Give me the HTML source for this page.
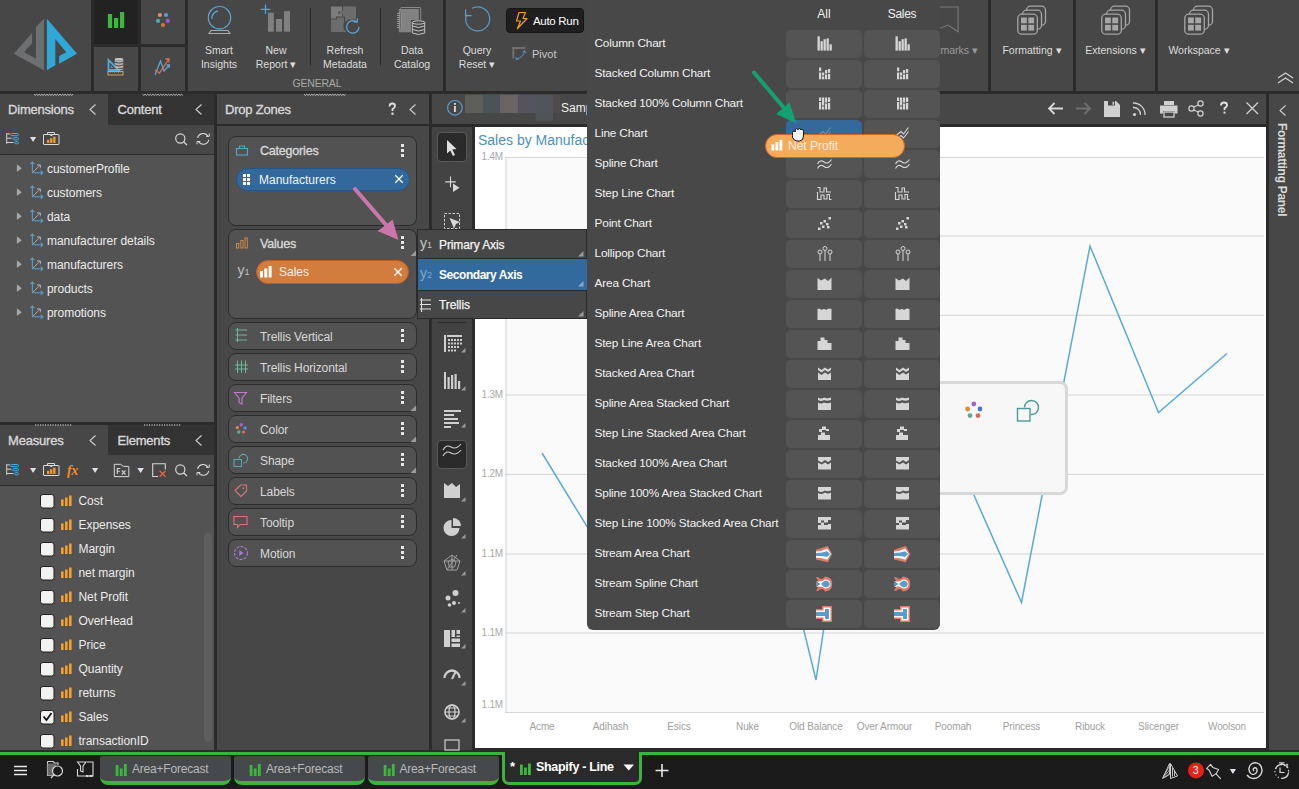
<!DOCTYPE html>
<html><head><meta charset="utf-8">
<style>
*{box-sizing:border-box;margin:0;padding:0}
html,body{width:1299px;height:789px;overflow:hidden;background:#2b2b2b;font-family:"Liberation Sans",sans-serif;color:#e0e0e0}
.a{position:absolute}
.t{position:absolute;white-space:nowrap;line-height:1}
svg{position:absolute;overflow:visible}
.rt{font-size:10.5px;color:#dcdcdc;text-align:center;line-height:14px}
.cell{position:absolute;width:76px;height:28px;background:#545454;border-radius:5px}
.dz{position:absolute;left:228px;width:189px;background:#525252;border:1px solid #2c2c2c;border-radius:8px}
.dzs{height:27px}
.kb{position:absolute;width:3px;height:3px;background:#e6e6e6;box-shadow:0 5px 0 #e6e6e6,0 10px 0 #e6e6e6}
</style></head><body>
<!-- ============ RIBBON ============ -->
<div class="a" style="left:0;top:0;width:91px;height:91px;background:#474747"></div>
<svg style="left:0;top:0" width="91" height="91">
 <polygon fill="#6e6f71" points="43.9,18.8 43.9,70.2 13.8,53.8 32.1,32.9 32.1,43.2 24.1,51.9 35.9,58.8 35.9,27.2"/>
 <polygon fill="#2fa8d8" points="46.9,18.8 77,53.8 59.1,63.7 59.1,56.1 66.3,52.3 55.3,39 55.3,65.2 46.9,70.2"/>
</svg>
<div class="a" style="left:94px;top:0;width:44px;height:44px;background:#222"></div>
<div class="a" style="left:141px;top:0;width:44px;height:44px;background:#474747"></div>
<div class="a" style="left:94px;top:47px;width:44px;height:44px;background:#474747"></div>
<div class="a" style="left:141px;top:47px;width:44px;height:44px;background:#474747"></div>
<div class="a" style="left:188px;top:0;width:255px;height:91px;background:#474747"></div>
<div class="a" style="left:446px;top:0;width:542px;height:91px;background:#474747"></div>
<div class="a" style="left:991px;top:0;width:82px;height:91px;background:#474747"></div>
<div class="a" style="left:1076px;top:0;width:79px;height:91px;background:#474747"></div>
<div class="a" style="left:1158px;top:0;width:141px;height:91px;background:#474747"></div>


<!-- ribbon tile icons -->
<svg style="left:94px;top:0" width="44" height="44">
 <rect x="13.9" y="14" width="4.2" height="14" fill="#3cb83c"/>
 <rect x="20" y="18" width="4.2" height="10" fill="#3cb83c"/>
 <rect x="26" y="12" width="4.2" height="16" fill="#3cb83c"/>
</svg>
<svg style="left:141px;top:0" width="44" height="44">
 <circle cx="18.9" cy="15" r="2.1" fill="#e58a7a"/>
 <circle cx="25" cy="15" r="2.1" fill="#5a9fd0"/>
 <circle cx="17" cy="20.9" r="2.1" fill="#4fae9c"/>
 <circle cx="26.8" cy="20.9" r="2.1" fill="#9a5bc9"/>
 <circle cx="22" cy="25" r="2.1" fill="#d9762b"/>
</svg>
<svg style="left:94px;top:47px" width="44" height="44">
 <path d="M14.5,13 L14.5,23 L24.5,23 Z" fill="none" stroke="#5aa7d6" stroke-width="1.8" stroke-linejoin="miter"/>
 <path d="M16.8,18.5 L16.8,21 L19.3,21 Z" fill="#5aa7d6"/>
 <ellipse cx="25" cy="12.3" rx="4.3" ry="1.3" fill="#c8c8c8"/>
 <path d="M20.7,13 v1.8 q4.3,1.6 8.6,0 v-1.8 q-4.3,1.6 -8.6,0z M20.7,15.8 v1.8 q4.3,1.6 8.6,0 v-1.8 q-4.3,1.6 -8.6,0z M20.7,18.6 v1.8 q4.3,1.6 8.6,0 v-1.8 q-4.3,1.6 -8.6,0z M22.5,21.4 v1.2 q3,1 6.8,0 v-1.2 q-3,1 -6.8,0z" fill="#b4b4b4"/>
 <rect x="14" y="24.5" width="15" height="3.5" fill="none" stroke="#d1a35a" stroke-width="1"/>
 <path d="M16.5,24.5 v1.5 M18.5,24.5 v1 M20.5,24.5 v1.5 M22.5,24.5 v1 M24.5,24.5 v1.5 M26.5,24.5 v1" stroke="#d1a35a" stroke-width="0.7"/>
</svg>
<svg style="left:141px;top:47px" width="44" height="44">
 <polyline points="14,28 19.5,14 23,24 28,18.5" fill="none" stroke="#5aa7d6" stroke-width="1.3"/>
 <path d="M25.5,18 L28.5,18 L28,21" fill="none" stroke="#5aa7d6" stroke-width="1.3"/>
 <polyline points="14,23 18.5,26 27.5,12.5" fill="none" stroke="#e07050" stroke-width="1.3"/>
 <path d="M24.5,12 L28,12 L27.8,15.5" fill="none" stroke="#e07050" stroke-width="1.3"/>
</svg>
<!-- Smart Insights -->
<svg style="left:188px;top:0" width="60" height="40">
 <circle cx="31.5" cy="17.7" r="11.2" fill="none" stroke="#5aa7d6" stroke-width="1.2"/>
 <path d="M25,20 A7,7 0 0 1 31,12" fill="none" stroke="#5aa7d6" stroke-width="1.3" transform="translate(-1,-1)"/>
 <path d="M23,30.5 L40,30.5 L42,33.5 L21,33.5 Z" fill="none" stroke="#aaa" stroke-width="1.1"/>
</svg>
<div class="t rt" style="left:189px;top:43px;width:60px">Smart<br>Insights</div>
<!-- New Report -->
<svg style="left:255px;top:0" width="45" height="40">
 <rect x="13" y="12.7" width="5.8" height="19" fill="#808080"/>
 <rect x="21" y="19" width="6" height="12.7" fill="#808080"/>
 <rect x="29" y="11.2" width="6" height="20.5" fill="#808080"/>
 <path d="M10.5,4.5 v9.5 M5.8,9.3 h9.5" stroke="#4aa5e0" stroke-width="1.3"/>
</svg>
<div class="t rt" style="left:246px;top:43px;width:60px">New<br>Report &#9662;</div>
<div class="a" style="left:310px;top:8px;width:1px;height:58px;background:#2a2a2a"></div>
<!-- Refresh Metadata -->
<svg style="left:315px;top:0" width="60" height="40">
 <path d="M16,6.5 H27 V11 H23.5 V14 H27 V16.5 H21 V18.5 H16 Z" fill="#7c7c7c"/>
 <path d="M28,6.5 H41 V19.5 H35 A7,7 0 0 0 30,22 V16.5 H28 V14 H24.5 V11 H28 Z" fill="#6c6c6c"/>
 <path d="M16,19.5 H22 V17.5 H29 V23 A7,7 0 0 0 31.5,32 H16 Z" fill="#6c6c6c"/>
 <path d="M44,27 A6.2,6.2 0 1 1 41.5,22" fill="none" stroke="#5aa7d6" stroke-width="1.3"/>
 <path d="M38.5,21.5 L42,22.3 L42.5,18.5" fill="none" stroke="#5aa7d6" stroke-width="1.3"/>
</svg>
<div class="t rt" style="left:315px;top:43px;width:60px">Refresh<br>Metadata</div>
<div class="a" style="left:380px;top:8px;width:1px;height:58px;background:#2a2a2a"></div>
<!-- Data Catalog -->
<svg style="left:385px;top:0" width="50" height="40">
 <path d="M15.5,9 V8.5 Q15.5,7.5 16.5,7.5 H35 Q35.7,7.5 35.7,8.5 V20" fill="none" stroke="#8a8a8a" stroke-width="1"/>
 <rect x="14.2" y="9.5" width="19" height="22.3" fill="#828282"/>
 <rect x="14.2" y="9.5" width="19" height="22.3" fill="none" stroke="#8c8c8c" stroke-width="0.8"/>
 <path d="M12,13.5 H17 M12,15.5 H17 M12,17.5 H17 M12,19.5 H17 M12,21.5 H17 M12,23.5 H17 M12,25.5 H17 M12,27.5 H17" stroke="#9c9c9c" stroke-width="0.9"/>
 <path d="M15.5,12.5 V28.5" stroke="#6a6a6a" stroke-width="1"/>
 <rect x="26" y="20" width="15" height="16" fill="#474747"/>
 <ellipse cx="33.5" cy="22.5" rx="6.2" ry="1.7" fill="none" stroke="#c4c4c4" stroke-width="1"/>
 <path d="M27.3,22.5 V33 Q33.5,36 39.7,33 V22.5 M27.3,26 Q33.5,29 39.7,26 M27.3,29.5 Q33.5,32.5 39.7,29.5" fill="none" stroke="#c4c4c4" stroke-width="1"/>
</svg>
<div class="t rt" style="left:382px;top:43px;width:60px">Data<br>Catalog</div>
<div class="t" style="left:292.5px;top:77.5px;font-size:10.5px;color:#a8a8a8;letter-spacing:-0.2px">GENERAL</div>
<!-- Query Reset -->
<svg style="left:455px;top:0" width="45" height="40">
 <path d="M11.5,14.5 A12,12 0 1 0 17,8.3" fill="none" stroke="#5a9ccc" stroke-width="1.2"/>
 <path d="M10.6,9.5 L10.6,15.6 L16.7,15.6" fill="none" stroke="#5a9ccc" stroke-width="1.2"/>
</svg>
<div class="t rt" style="left:447px;top:43px;width:60px">Query<br>Reset &#9662;</div>
<!-- Auto Run -->
<div class="a" style="left:506px;top:8px;width:78px;height:25px;background:#1f1f1f;border:1px solid #151515;border-radius:4px"></div>
<svg style="left:506px;top:8px" width="78" height="25">
 <path d="M13,4.5 L19.5,4.5 L17,10.5 L21,10.5 L11.5,20.5 L14.5,13 L10.5,13 Z" fill="none" stroke="#f0a020" stroke-width="1.2" stroke-linejoin="round"/>
</svg>
<div class="t" style="left:533px;top:15.5px;font-size:11.5px;color:#fff;letter-spacing:-0.3px">Auto Run</div>
<!-- Pivot -->
<svg style="left:510px;top:45px" width="20" height="18">
 <rect x="2.3" y="2" width="2" height="11.5" fill="#707070"/>
 <rect x="2.3" y="2" width="13" height="2" fill="#707070"/>
 <path d="M6.5,13.5 Q13.5,13 14.5,6" fill="none" stroke="#5a8fb8" stroke-width="1"/>
 <path d="M12.8,7.5 L14.5,5.5 L16,7.8 M6,12 L6,14.2 L8.5,14.5" fill="none" stroke="#5a8fb8" stroke-width="1"/>
</svg>
<div class="t" style="left:532px;top:48.5px;font-size:11px;color:#c8c8c8">Pivot</div>
<!-- Bookmarks (partially hidden) -->
<svg style="left:930px;top:0" width="50" height="40">
 <path d="M1,7 H28 V31.7 L18,25 L1,31.7" fill="none" stroke="#7a7a7a" stroke-width="1.1"/>
</svg>
<div class="t" style="left:890px;top:45px;width:88px;text-align:right;font-size:10.5px;color:#9a9a9a">Bookmarks &#9662;</div>
<svg style="left:1016px;top:0" width="40" height="40">
 <rect x="10.5" y="6.2" width="19" height="19" rx="4" fill="#474747" stroke="#a6a6a6" stroke-width="1.3"/>
 <rect x="6.5" y="10.2" width="19" height="19" rx="4" fill="#474747" stroke="#a6a6a6" stroke-width="1.3"/>
 <rect x="1.8" y="14.2" width="19.5" height="20" rx="4" fill="#474747" stroke="#a6a6a6" stroke-width="1.3"/>
 <rect x="5" y="17.5" width="5.8" height="5.8" fill="#a6a6a6"/><rect x="12.3" y="17.5" width="5.8" height="5.8" fill="#a6a6a6"/>
 <rect x="5" y="24.8" width="5.8" height="5.8" fill="#a6a6a6"/><rect x="12.3" y="24.8" width="5.8" height="5.8" fill="#a6a6a6"/>
</svg><div class="t rt" style="left:991px;top:43px;width:82px">Formatting &#9662;</div>
<svg style="left:1100px;top:0" width="40" height="40">
 <rect x="10.5" y="6.2" width="19" height="19" rx="4" fill="#474747" stroke="#a6a6a6" stroke-width="1.3"/>
 <rect x="6.5" y="10.2" width="19" height="19" rx="4" fill="#474747" stroke="#a6a6a6" stroke-width="1.3"/>
 <rect x="1.8" y="14.2" width="19.5" height="20" rx="4" fill="#474747" stroke="#a6a6a6" stroke-width="1.3"/>
 <rect x="5" y="17.5" width="5.8" height="5.8" fill="#a6a6a6"/><rect x="12.3" y="17.5" width="5.8" height="5.8" fill="#a6a6a6"/>
 <rect x="5" y="24.8" width="5.8" height="5.8" fill="#a6a6a6"/><rect x="12.3" y="24.8" width="5.8" height="5.8" fill="#a6a6a6"/>
</svg><div class="t rt" style="left:1076px;top:43px;width:79px">Extensions &#9662;</div>
<svg style="left:1183px;top:0" width="40" height="40">
 <rect x="10.5" y="6.2" width="19" height="19" rx="4" fill="#474747" stroke="#a6a6a6" stroke-width="1.3"/>
 <rect x="6.5" y="10.2" width="19" height="19" rx="4" fill="#474747" stroke="#a6a6a6" stroke-width="1.3"/>
 <rect x="1.8" y="14.2" width="19.5" height="20" rx="4" fill="#474747" stroke="#a6a6a6" stroke-width="1.3"/>
 <rect x="5" y="17.5" width="5.8" height="5.8" fill="#a6a6a6"/><rect x="12.3" y="17.5" width="5.8" height="5.8" fill="#a6a6a6"/>
 <rect x="5" y="24.8" width="5.8" height="5.8" fill="#a6a6a6"/><rect x="12.3" y="24.8" width="5.8" height="5.8" fill="#a6a6a6"/>
</svg><div class="t rt" style="left:1158px;top:43px;width:82px">Workspace &#9662;</div>
<svg style="left:1276px;top:70px" width="20" height="16">
 <path d="M2,8 L9.5,3 L17,8 M2,13 L9.5,8 L17,13" fill="none" stroke="#d0d0d0" stroke-width="1.2"/>
</svg>

<!-- ============ LEFT PANELS ============ -->
<!-- Dimensions -->
<div class="a" style="left:0;top:94px;width:108px;height:31px;background:#474747"></div>
<div class="a" style="left:108px;top:94px;width:106px;height:31px;background:#333"></div>
<div class="a" style="left:0;top:125px;width:214px;height:29px;background:#474747"></div>
<div class="a" style="left:0;top:155px;width:214px;height:267px;background:#535353"></div>
<!-- Measures -->
<div class="a" style="left:0;top:425px;width:108px;height:30px;background:#474747"></div>
<div class="a" style="left:108px;top:425px;width:106px;height:30px;background:#333"></div>
<div class="a" style="left:0;top:455px;width:214px;height:30px;background:#474747"></div>
<div class="a" style="left:0;top:486px;width:214px;height:264px;background:#535353"></div>


<!-- grips -->
<svg style="left:0;top:93px;z-index:5" width="430" height="4">
 <path d="M34,1.2 L35.3,2.4 L36.599999999999994,1.2 L37.89999999999999,2.4 L39.19999999999999,1.2 L40.499999999999986,2.4 L41.79999999999998,1.2 L43.09999999999998,2.4 L44.39999999999998,1.2 L45.699999999999974,2.4 L46.99999999999997,1.2 L48.29999999999997,2.4 L49.599999999999966,1.2 L50.89999999999996,2.4 L52.19999999999996,1.2 L53.49999999999996,2.4 L54.799999999999955,1.2 L56.09999999999995,2.4 L57.39999999999995,1.2 L58.699999999999946,2.4 L59.99999999999994,1.2 L61.29999999999994,2.4 L62.59999999999994,1.2 L63.899999999999935,2.4 L65.19999999999993,1.2 L66.49999999999993,2.4 L67.79999999999993,1.2 L69.09999999999992,2.4 L70.39999999999992,1.2 L71.69999999999992,2.4 L72.99999999999991,1.2 M142.5,1.2 L143.8,2.4 L145.10000000000002,1.2 L146.40000000000003,2.4 L147.70000000000005,1.2 L149.00000000000006,2.4 L150.30000000000007,1.2 L151.60000000000008,2.4 L152.9000000000001,1.2 L154.2000000000001,2.4 L155.5000000000001,1.2 L156.80000000000013,2.4 L158.10000000000014,1.2 L159.40000000000015,2.4 L160.70000000000016,1.2 L162.00000000000017,2.4 L163.30000000000018,1.2 L164.6000000000002,2.4 L165.9000000000002,1.2 L167.20000000000022,2.4 L168.50000000000023,1.2 L169.80000000000024,2.4 L171.10000000000025,1.2 L172.40000000000026,2.4 L173.70000000000027,1.2 L175.00000000000028,2.4 L176.3000000000003,1.2 L177.6000000000003,2.4 L178.90000000000032,1.2 L180.20000000000033,2.4 L181.50000000000034,1.2 L182.80000000000035,2.4 M304,1.2 L305.3,2.4 L306.6,1.2 L307.90000000000003,2.4 L309.20000000000005,1.2 L310.50000000000006,2.4 L311.80000000000007,1.2 L313.1000000000001,2.4 L314.4000000000001,1.2 L315.7000000000001,2.4 L317.0000000000001,1.2 L318.3000000000001,2.4 L319.60000000000014,1.2 L320.90000000000015,2.4 L322.20000000000016,1.2 L323.50000000000017,2.4 L324.8000000000002,1.2 L326.1000000000002,2.4 L327.4000000000002,1.2 L328.7000000000002,2.4 L330.0000000000002,1.2 L331.30000000000024,2.4 L332.60000000000025,1.2 L333.90000000000026,2.4 L335.2000000000003,1.2 L336.5000000000003,2.4 L337.8000000000003,1.2 L339.1000000000003,2.4 L340.4000000000003,1.2 L341.70000000000033,2.4 L343.00000000000034,1.2 L344.30000000000035,2.4 L345.60000000000036,1.2" fill="none" stroke="#e0e0e0" stroke-width="0.8"/>
</svg>
<svg style="left:0;top:423px;z-index:5" width="220" height="4"><path d="M35,2 H72 M144,2 H181" stroke="#e8e8e8" stroke-width="1.2" stroke-dasharray="1.2,1.3"/></svg>
<div class="t" style="left:8px;top:103px;font-size:13px;color:#d8d8d8;letter-spacing:-0.2px;-webkit-text-stroke:0.35px #d8d8d8">Dimensions</div>
<div class="t" style="left:117.5px;top:103px;font-size:13px;color:#d8d8d8;letter-spacing:-0.2px;-webkit-text-stroke:0.35px #d8d8d8">Content</div>
<svg style="left:0;top:94px" width="214" height="31">
 <path d="M95.5,10.5 L90,15.5 L95.5,20.5 M201.5,10.5 L196,15.5 L201.5,20.5" fill="none" stroke="#cfcfcf" stroke-width="1.1"/>
</svg>
<!-- dims toolbar -->
<svg style="left:0;top:125px" width="214" height="29">
 <path d="M6.7,8.1 V18.9 M6.7,8.9 H10 M6.7,13.2 H11.5 M6.7,17.5 H13.5" fill="none" stroke="#d0d0d0" stroke-width="1"/>
 <rect x="10.7" y="8.5" width="7.8" height="2.2" rx="1.1" fill="none" stroke="#3cb0f0" stroke-width="1"/>
 <rect x="12.8" y="12.6" width="5.7" height="2.2" rx="1.1" fill="none" stroke="#3cb0f0" stroke-width="1"/>
 <rect x="14.7" y="16.6" width="3.8" height="2.2" rx="1.1" fill="none" stroke="#3cb0f0" stroke-width="1"/>
 <path d="M30,12 H36.2 L33.1,16.9 Z" fill="#dde2ea"/>
 <rect x="43.5" y="9.5" width="15.5" height="10" rx="0.5" fill="none" stroke="#d8d8d8" stroke-width="1"/>
 <path d="M47.5,9.5 V7.5 H54.5 V9.5" fill="none" stroke="#d8d8d8" stroke-width="1"/>
 <rect x="50.3" y="10" width="2" height="1" fill="#d8d8d8"/>
 <rect x="47" y="14.8" width="2.3" height="3.1" fill="#f0a030"/><rect x="50.1" y="13.2" width="2.3" height="4.7" fill="#f0a030"/><rect x="53.2" y="11.7" width="2.3" height="6.2" fill="#f0a030"/>
 <circle cx="180.3" cy="13.5" r="4.6" fill="none" stroke="#d8d8d8" stroke-width="1.2"/>
 <path d="M183.6,16.8 L186.9,20" stroke="#d8d8d8" stroke-width="1.3"/>
 <path d="M197.6,13 A5.6,5.6 0 0 1 208,11.5 M208.8,14.8 A5.6,5.6 0 0 1 198.4,16.3" fill="none" stroke="#d8d8d8" stroke-width="1.1"/>
 <path d="M206,11.3 H209.3 V8.5 M200.3,16.5 H197 V19.3" fill="none" stroke="#d8d8d8" stroke-width="1"/>
</svg>
<svg style="left:0;top:160.7px" width="47" height="16">
 <path d="M16.9,3.3 L21.8,7.2 L16.9,11.1 Z" fill="#a8a8a8"/>
 <path d="M32.4,1 V11.7 H42.8 M30.3,3.1 L32.4,1 L34.5,3.1 M40.7,9.6 L42.8,11.7 L40.7,13.8" fill="none" stroke="#5a9ec9" stroke-width="1.1"/>
 <path d="M33.4,10.8 L40.2,4 M37.1,3.9 H40.4 V7.2" fill="none" stroke="#c8c8c8" stroke-width="1" stroke-dasharray="1.6,0.5"/>
</svg>
<div class="t" style="left:47px;top:163.2px;font-size:12px;color:#ececec;letter-spacing:-0.05px">customerProfile</div>
<svg style="left:0;top:184.7px" width="47" height="16">
 <path d="M16.9,3.3 L21.8,7.2 L16.9,11.1 Z" fill="#a8a8a8"/>
 <path d="M32.4,1 V11.7 H42.8 M30.3,3.1 L32.4,1 L34.5,3.1 M40.7,9.6 L42.8,11.7 L40.7,13.8" fill="none" stroke="#5a9ec9" stroke-width="1.1"/>
 <path d="M33.4,10.8 L40.2,4 M37.1,3.9 H40.4 V7.2" fill="none" stroke="#c8c8c8" stroke-width="1" stroke-dasharray="1.6,0.5"/>
</svg>
<div class="t" style="left:47px;top:187.2px;font-size:12px;color:#ececec;letter-spacing:-0.05px">customers</div>
<svg style="left:0;top:208.7px" width="47" height="16">
 <path d="M16.9,3.3 L21.8,7.2 L16.9,11.1 Z" fill="#a8a8a8"/>
 <path d="M32.4,1 V11.7 H42.8 M30.3,3.1 L32.4,1 L34.5,3.1 M40.7,9.6 L42.8,11.7 L40.7,13.8" fill="none" stroke="#5a9ec9" stroke-width="1.1"/>
 <path d="M33.4,10.8 L40.2,4 M37.1,3.9 H40.4 V7.2" fill="none" stroke="#c8c8c8" stroke-width="1" stroke-dasharray="1.6,0.5"/>
</svg>
<div class="t" style="left:47px;top:211.2px;font-size:12px;color:#ececec;letter-spacing:-0.05px">data</div>
<svg style="left:0;top:232.7px" width="47" height="16">
 <path d="M16.9,3.3 L21.8,7.2 L16.9,11.1 Z" fill="#a8a8a8"/>
 <path d="M32.4,1 V11.7 H42.8 M30.3,3.1 L32.4,1 L34.5,3.1 M40.7,9.6 L42.8,11.7 L40.7,13.8" fill="none" stroke="#5a9ec9" stroke-width="1.1"/>
 <path d="M33.4,10.8 L40.2,4 M37.1,3.9 H40.4 V7.2" fill="none" stroke="#c8c8c8" stroke-width="1" stroke-dasharray="1.6,0.5"/>
</svg>
<div class="t" style="left:47px;top:235.2px;font-size:12px;color:#ececec;letter-spacing:-0.05px">manufacturer details</div>
<svg style="left:0;top:256.7px" width="47" height="16">
 <path d="M16.9,3.3 L21.8,7.2 L16.9,11.1 Z" fill="#a8a8a8"/>
 <path d="M32.4,1 V11.7 H42.8 M30.3,3.1 L32.4,1 L34.5,3.1 M40.7,9.6 L42.8,11.7 L40.7,13.8" fill="none" stroke="#5a9ec9" stroke-width="1.1"/>
 <path d="M33.4,10.8 L40.2,4 M37.1,3.9 H40.4 V7.2" fill="none" stroke="#c8c8c8" stroke-width="1" stroke-dasharray="1.6,0.5"/>
</svg>
<div class="t" style="left:47px;top:259.2px;font-size:12px;color:#ececec;letter-spacing:-0.05px">manufacturers</div>
<svg style="left:0;top:280.7px" width="47" height="16">
 <path d="M16.9,3.3 L21.8,7.2 L16.9,11.1 Z" fill="#a8a8a8"/>
 <path d="M32.4,1 V11.7 H42.8 M30.3,3.1 L32.4,1 L34.5,3.1 M40.7,9.6 L42.8,11.7 L40.7,13.8" fill="none" stroke="#5a9ec9" stroke-width="1.1"/>
 <path d="M33.4,10.8 L40.2,4 M37.1,3.9 H40.4 V7.2" fill="none" stroke="#c8c8c8" stroke-width="1" stroke-dasharray="1.6,0.5"/>
</svg>
<div class="t" style="left:47px;top:283.2px;font-size:12px;color:#ececec;letter-spacing:-0.05px">products</div>
<svg style="left:0;top:304.7px" width="47" height="16">
 <path d="M16.9,3.3 L21.8,7.2 L16.9,11.1 Z" fill="#a8a8a8"/>
 <path d="M32.4,1 V11.7 H42.8 M30.3,3.1 L32.4,1 L34.5,3.1 M40.7,9.6 L42.8,11.7 L40.7,13.8" fill="none" stroke="#5a9ec9" stroke-width="1.1"/>
 <path d="M33.4,10.8 L40.2,4 M37.1,3.9 H40.4 V7.2" fill="none" stroke="#c8c8c8" stroke-width="1" stroke-dasharray="1.6,0.5"/>
</svg>
<div class="t" style="left:47px;top:307.2px;font-size:12px;color:#ececec;letter-spacing:-0.05px">promotions</div>

<div class="t" style="left:8px;top:433.5px;font-size:13px;color:#d8d8d8;letter-spacing:-0.2px;-webkit-text-stroke:0.35px #d8d8d8">Measures</div>
<div class="t" style="left:117.5px;top:433.5px;font-size:13px;color:#d8d8d8;letter-spacing:-0.2px;-webkit-text-stroke:0.35px #d8d8d8">Elements</div>
<svg style="left:0;top:425px" width="214" height="30">
 <path d="M95.5,10.5 L90,15.5 L95.5,20.5 M201.5,10.5 L196,15.5 L201.5,20.5" fill="none" stroke="#cfcfcf" stroke-width="1.1"/>
</svg>
<svg style="left:0;top:455px" width="214" height="30">
 <path d="M6.7,9.1 V19.9 M6.7,9.9 H10 M6.7,14.2 H11.5 M6.7,18.5 H13.5" fill="none" stroke="#d0d0d0" stroke-width="1"/>
 <rect x="10.7" y="9.5" width="7.8" height="2.2" rx="1.1" fill="none" stroke="#3cb0f0" stroke-width="1"/>
 <rect x="12.8" y="13.6" width="5.7" height="2.2" rx="1.1" fill="none" stroke="#3cb0f0" stroke-width="1"/>
 <rect x="14.7" y="17.6" width="3.8" height="2.2" rx="1.1" fill="none" stroke="#3cb0f0" stroke-width="1"/>
 <path d="M30,13 H36.2 L33.1,17.9 Z" fill="#dde2ea"/>
 <rect x="43.5" y="10.5" width="15.5" height="10" rx="0.5" fill="none" stroke="#d8d8d8" stroke-width="1"/>
 <path d="M47.5,10.5 V8.5 H54.5 V10.5" fill="none" stroke="#d8d8d8" stroke-width="1"/>
 <rect x="50.3" y="11" width="2" height="1" fill="#d8d8d8"/>
 <rect x="47" y="15.8" width="2.3" height="3.1" fill="#f0a030"/><rect x="50.1" y="14.2" width="2.3" height="4.7" fill="#f0a030"/><rect x="53.2" y="12.7" width="2.3" height="6.2" fill="#f0a030"/>
 <circle cx="180.3" cy="14.5" r="4.6" fill="none" stroke="#d8d8d8" stroke-width="1.2"/>
 <path d="M183.6,17.8 L186.9,21" stroke="#d8d8d8" stroke-width="1.3"/>
 <path d="M197.6,14 A5.6,5.6 0 0 1 208,12.5 M208.8,15.8 A5.6,5.6 0 0 1 198.4,17.3" fill="none" stroke="#d8d8d8" stroke-width="1.1"/>
 <path d="M206,12.3 H209.3 V9.5 M200.3,17.5 H197 V20.3" fill="none" stroke="#d8d8d8" stroke-width="1"/>
 <path d="M92,13 H98.2 L95.1,17.9 Z" fill="#dde2ea"/>
 <path d="M114.3,9.3 H120.7 L123.3,11.4 H128.8 V21.6 H114.3 Z" fill="none" stroke="#d8d8d8" stroke-width="1"/>
 <path d="M117.3,19 V13.5 H120.3 M117.3,16.2 H119.8" fill="none" stroke="#d8d8d8" stroke-width="1.1"/>
 <path d="M121.8,15.5 L125.5,19.5 M125.5,15.5 L121.8,19.5" stroke="#c8c8c8" stroke-width="1.2"/>
 <path d="M137.3,13 H143.9 L140.6,18 Z" fill="#dde2ea"/>
 <path d="M158,21.5 H152.7 V8.8 H165.3 V14.5" fill="none" stroke="#d8d8d8" stroke-width="1.1"/>
 <path d="M159.6,15.7 L165.6,21.7 M165.6,15.7 L159.6,21.7" stroke="#e8643c" stroke-width="1.4"/>
</svg>
<div class="t" style="left:67px;top:464px;font-size:14px;font-style:italic;font-weight:bold;font-family:'Liberation Serif',serif;color:#f08a2a;letter-spacing:-0.5px">fx</div>
<svg style="left:0;top:493.5px" width="78" height="14">
 <rect x="40.5" y="0.5" width="13.5" height="13.5" rx="2.5" fill="#f2f2f2" stroke="#1e1e1e" stroke-width="1"/>
 <rect x="61" y="5.5" width="2.6" height="6.5" fill="#f0a030"/><rect x="65" y="3.5" width="2.6" height="8.5" fill="#f0a030"/><rect x="69" y="1.5" width="2.6" height="10.5" fill="#f0a030"/>
</svg>
<div class="t" style="left:78.5px;top:495.0px;font-size:12px;color:#ececec;letter-spacing:-0.05px">Cost</div>
<svg style="left:0;top:517.5px" width="78" height="14">
 <rect x="40.5" y="0.5" width="13.5" height="13.5" rx="2.5" fill="#f2f2f2" stroke="#1e1e1e" stroke-width="1"/>
 <rect x="61" y="5.5" width="2.6" height="6.5" fill="#f0a030"/><rect x="65" y="3.5" width="2.6" height="8.5" fill="#f0a030"/><rect x="69" y="1.5" width="2.6" height="10.5" fill="#f0a030"/>
</svg>
<div class="t" style="left:78.5px;top:519.0px;font-size:12px;color:#ececec;letter-spacing:-0.05px">Expenses</div>
<svg style="left:0;top:541.5px" width="78" height="14">
 <rect x="40.5" y="0.5" width="13.5" height="13.5" rx="2.5" fill="#f2f2f2" stroke="#1e1e1e" stroke-width="1"/>
 <rect x="61" y="5.5" width="2.6" height="6.5" fill="#f0a030"/><rect x="65" y="3.5" width="2.6" height="8.5" fill="#f0a030"/><rect x="69" y="1.5" width="2.6" height="10.5" fill="#f0a030"/>
</svg>
<div class="t" style="left:78.5px;top:543.0px;font-size:12px;color:#ececec;letter-spacing:-0.05px">Margin</div>
<svg style="left:0;top:565.5px" width="78" height="14">
 <rect x="40.5" y="0.5" width="13.5" height="13.5" rx="2.5" fill="#f2f2f2" stroke="#1e1e1e" stroke-width="1"/>
 <rect x="61" y="5.5" width="2.6" height="6.5" fill="#f0a030"/><rect x="65" y="3.5" width="2.6" height="8.5" fill="#f0a030"/><rect x="69" y="1.5" width="2.6" height="10.5" fill="#f0a030"/>
</svg>
<div class="t" style="left:78.5px;top:567.0px;font-size:12px;color:#ececec;letter-spacing:-0.05px">net margin</div>
<svg style="left:0;top:589.5px" width="78" height="14">
 <rect x="40.5" y="0.5" width="13.5" height="13.5" rx="2.5" fill="#f2f2f2" stroke="#1e1e1e" stroke-width="1"/>
 <rect x="61" y="5.5" width="2.6" height="6.5" fill="#f0a030"/><rect x="65" y="3.5" width="2.6" height="8.5" fill="#f0a030"/><rect x="69" y="1.5" width="2.6" height="10.5" fill="#f0a030"/>
</svg>
<div class="t" style="left:78.5px;top:591.0px;font-size:12px;color:#ececec;letter-spacing:-0.05px">Net Profit</div>
<svg style="left:0;top:613.5px" width="78" height="14">
 <rect x="40.5" y="0.5" width="13.5" height="13.5" rx="2.5" fill="#f2f2f2" stroke="#1e1e1e" stroke-width="1"/>
 <rect x="61" y="5.5" width="2.6" height="6.5" fill="#f0a030"/><rect x="65" y="3.5" width="2.6" height="8.5" fill="#f0a030"/><rect x="69" y="1.5" width="2.6" height="10.5" fill="#f0a030"/>
</svg>
<div class="t" style="left:78.5px;top:615.0px;font-size:12px;color:#ececec;letter-spacing:-0.05px">OverHead</div>
<svg style="left:0;top:637.5px" width="78" height="14">
 <rect x="40.5" y="0.5" width="13.5" height="13.5" rx="2.5" fill="#f2f2f2" stroke="#1e1e1e" stroke-width="1"/>
 <rect x="61" y="5.5" width="2.6" height="6.5" fill="#f0a030"/><rect x="65" y="3.5" width="2.6" height="8.5" fill="#f0a030"/><rect x="69" y="1.5" width="2.6" height="10.5" fill="#f0a030"/>
</svg>
<div class="t" style="left:78.5px;top:639.0px;font-size:12px;color:#ececec;letter-spacing:-0.05px">Price</div>
<svg style="left:0;top:661.5px" width="78" height="14">
 <rect x="40.5" y="0.5" width="13.5" height="13.5" rx="2.5" fill="#f2f2f2" stroke="#1e1e1e" stroke-width="1"/>
 <rect x="61" y="5.5" width="2.6" height="6.5" fill="#f0a030"/><rect x="65" y="3.5" width="2.6" height="8.5" fill="#f0a030"/><rect x="69" y="1.5" width="2.6" height="10.5" fill="#f0a030"/>
</svg>
<div class="t" style="left:78.5px;top:663.0px;font-size:12px;color:#ececec;letter-spacing:-0.05px">Quantity</div>
<svg style="left:0;top:685.5px" width="78" height="14">
 <rect x="40.5" y="0.5" width="13.5" height="13.5" rx="2.5" fill="#f2f2f2" stroke="#1e1e1e" stroke-width="1"/>
 <rect x="61" y="5.5" width="2.6" height="6.5" fill="#f0a030"/><rect x="65" y="3.5" width="2.6" height="8.5" fill="#f0a030"/><rect x="69" y="1.5" width="2.6" height="10.5" fill="#f0a030"/>
</svg>
<div class="t" style="left:78.5px;top:687.0px;font-size:12px;color:#ececec;letter-spacing:-0.05px">returns</div>
<svg style="left:0;top:709.5px" width="78" height="14">
 <rect x="40.5" y="0.5" width="13.5" height="13.5" rx="2.5" fill="#f2f2f2" stroke="#1e1e1e" stroke-width="1"/><path d="M43.5,6.5 L46.5,10 L51.5,3" fill="none" stroke="#111" stroke-width="1.8"/>
 <rect x="61" y="5.5" width="2.6" height="6.5" fill="#f0a030"/><rect x="65" y="3.5" width="2.6" height="8.5" fill="#f0a030"/><rect x="69" y="1.5" width="2.6" height="10.5" fill="#f0a030"/>
</svg>
<div class="t" style="left:78.5px;top:711.0px;font-size:12px;color:#ececec;letter-spacing:-0.05px">Sales</div>
<svg style="left:0;top:733.5px" width="78" height="14">
 <rect x="40.5" y="0.5" width="13.5" height="13.5" rx="2.5" fill="#f2f2f2" stroke="#1e1e1e" stroke-width="1"/>
 <rect x="61" y="5.5" width="2.6" height="6.5" fill="#f0a030"/><rect x="65" y="3.5" width="2.6" height="8.5" fill="#f0a030"/><rect x="69" y="1.5" width="2.6" height="10.5" fill="#f0a030"/>
</svg>
<div class="t" style="left:78.5px;top:735.0px;font-size:12px;color:#ececec;letter-spacing:-0.05px">transactionID</div>
<div class="a" style="left:204px;top:533px;width:8px;height:209px;background:#5e5e5e;border-radius:4px"></div>

<!-- Drop zones panel -->
<div class="a" style="left:217px;top:94px;width:212px;height:30px;background:#474747"></div>
<div class="a" style="left:217px;top:126px;width:212px;height:624px;background:#474747"></div>


<div class="t" style="left:225px;top:103px;font-size:13px;color:#d8d8d8;letter-spacing:-0.2px;-webkit-text-stroke:0.35px #d8d8d8">Drop Zones</div>
<svg style="left:380px;top:94px" width="50" height="31">
 <path d="M9.5,12.5 Q9.5,9.5 12.3,9.5 Q15,9.5 15,12 Q15,13.8 12.5,15 V17" fill="none" stroke="#e0e0e0" stroke-width="1.8"/>
 <rect x="11.4" y="18.6" width="2.2" height="2.2" fill="#e0e0e0"/>
 <path d="M35.5,10.5 L30,15.5 L35.5,20.5" fill="none" stroke="#cfcfcf" stroke-width="1.1"/>
</svg>
<!-- Categories -->
<div class="dz" style="top:136px;height:90px"></div>
<svg style="left:228px;top:136px" width="30" height="30">
 <rect x="8.5" y="12.5" width="11" height="6.5" fill="none" stroke="#5aa3d0" stroke-width="1.1"/>
 <path d="M11.5,12.5 V10 H16.5 V12.5" fill="none" stroke="#5aa3d0" stroke-width="1.1"/>
</svg>
<div class="t" style="left:260px;top:145px;font-size:12.5px;color:#d8d8d8;letter-spacing:-0.2px;-webkit-text-stroke:0.35px #d8d8d8">Categories</div>
<div class="kb" style="left:401px;top:143.5px"></div>
<div class="a" style="left:235.5px;top:167.5px;width:174.5px;height:23.5px;background:#32689c;border:1px solid #24548a;border-radius:12px"></div>
<svg style="left:240px;top:172px" width="14" height="14">
 <rect x="3" y="2" width="3" height="3" fill="#fff"/><rect x="7" y="2" width="3" height="3" fill="#fff"/>
 <rect x="3" y="6" width="3" height="3" fill="#fff"/><rect x="7" y="6" width="3" height="3" fill="#fff"/>
 <rect x="3" y="10" width="3" height="3" fill="#fff"/><rect x="7" y="10" width="3" height="3" fill="#fff"/>
</svg>
<div class="t" style="left:259px;top:173.5px;font-size:12px;color:#f4f4f4">Manufacturers</div>
<svg style="left:393px;top:173px" width="12" height="12">
 <path d="M2.3,2.3 L9.7,9.7 M9.7,2.3 L2.3,9.7" stroke="#fff" stroke-width="1.3"/>
</svg>
<!-- Values -->
<div class="dz" style="top:229px;height:89.5px"></div>
<svg style="left:228px;top:229px" width="30" height="30">
 <rect x="8.5" y="14.5" width="2.3" height="4.5" fill="none" stroke="#c8884a" stroke-width="1"/>
 <rect x="12.8" y="11.5" width="2.3" height="7.5" fill="none" stroke="#c8884a" stroke-width="1"/>
 <rect x="17" y="9" width="2.3" height="10" fill="none" stroke="#c8884a" stroke-width="1"/>
</svg>
<div class="t" style="left:260px;top:238px;font-size:12.5px;color:#d8d8d8;letter-spacing:-0.2px;-webkit-text-stroke:0.35px #d8d8d8">Values</div>
<div class="kb" style="left:400.5px;top:236px"></div>
<svg style="left:410px;top:250px" width="8" height="8"><path d="M6,0.5 V6 H0.5 Z" fill="#9a9a9a"/></svg>
<div class="t" style="left:237.5px;top:263px;font-size:14px;color:#c0c0c0">y<span style="font-size:9px">1</span></div>
<div class="a" style="left:255.5px;top:260px;width:153px;height:23.5px;background:#d27c3e;border:1px solid #b65f2a;border-radius:12px"></div>
<svg style="left:258px;top:264px" width="16" height="16">
 <rect x="2" y="7" width="3" height="6.5" fill="#fff"/><rect x="6.3" y="4.5" width="3" height="9" fill="#fff"/><rect x="10.6" y="2" width="3" height="11.5" fill="#fff"/>
</svg>
<div class="t" style="left:279px;top:266px;font-size:12px;color:#f8f0e8">Sales</div>
<svg style="left:392px;top:266px" width="12" height="12">
 <path d="M2.3,2.3 L9.7,9.7 M9.7,2.3 L2.3,9.7" stroke="#fff" stroke-width="1.3"/>
</svg>
<div class="dz" style="top:322.0px;height:28px"></div>
<svg style="left:228px;top:321.0px" width="30" height="28"><path d="M9.5,7 V21 M7.5,9 H19 M7.5,14 H19 M7.5,19 H19" stroke="#6fb89a" stroke-width="1"/></svg>
<div class="t" style="left:260px;top:330.5px;font-size:12px;color:#d8d8d8;letter-spacing:-0.1px">Trellis Vertical</div>
<div class="kb" style="left:400.5px;top:329.0px"></div>
<div class="dz" style="top:353.0px;height:28px"></div>
<svg style="left:228px;top:352.0px" width="30" height="28"><path d="M7,13 H20 M7,17 H20 M9.5,8.5 V21 M13.5,8.5 V21 M17.5,8.5 V21" stroke="#6fb89a" stroke-width="1"/></svg>
<div class="t" style="left:260px;top:361.5px;font-size:12px;color:#d8d8d8;letter-spacing:-0.1px">Trellis Horizontal</div>
<div class="kb" style="left:400.5px;top:360.0px"></div>
<div class="dz" style="top:384.0px;height:28px"></div>
<svg style="left:228px;top:387.0px" width="30" height="28"><path d="M6.5,5.5 H18.5 L14,11 V17 L11,15.5 V11 Z" fill="none" stroke="#c27bd0" stroke-width="1.1"/></svg>
<div class="t" style="left:260px;top:392.5px;font-size:12px;color:#d8d8d8;letter-spacing:-0.1px">Filters</div>
<div class="kb" style="left:400.5px;top:391.0px"></div>
<svg style="left:410px;top:404.5px" width="8" height="8"><path d="M6,0.5 V6 H0.5 Z" fill="#9a9a9a"/></svg>
<div class="dz" style="top:415.0px;height:28px"></div>
<svg style="left:228px;top:418.0px" width="30" height="28"><circle cx="13.3" cy="6.8" r="1.7" fill="#a564c8"/><circle cx="9.3" cy="9.6" r="1.7" fill="#e08a3a"/><circle cx="17.1" cy="10" r="1.7" fill="#5a8fd0"/><circle cx="10.8" cy="14" r="1.7" fill="#6aa890"/><circle cx="15.5" cy="14.1" r="1.7" fill="#e0684a"/></svg>
<div class="t" style="left:260px;top:423.5px;font-size:12px;color:#d8d8d8;letter-spacing:-0.1px">Color</div>
<div class="kb" style="left:400.5px;top:422.0px"></div>
<svg style="left:410px;top:435.5px" width="8" height="8"><path d="M6,0.5 V6 H0.5 Z" fill="#9a9a9a"/></svg>
<div class="dz" style="top:446.0px;height:28px"></div>
<svg style="left:228px;top:449.0px" width="30" height="28"><rect x="6" y="10.5" width="7.5" height="7" fill="none" stroke="#5aa8a8" stroke-width="1.1"/><path d="M11,9.5 A4.3,4.3 0 1 1 15.5,14" fill="none" stroke="#5aa8a8" stroke-width="1.1"/></svg>
<div class="t" style="left:260px;top:454.5px;font-size:12px;color:#d8d8d8;letter-spacing:-0.1px">Shape</div>
<div class="kb" style="left:400.5px;top:453.0px"></div>
<svg style="left:410px;top:466.5px" width="8" height="8"><path d="M6,0.5 V6 H0.5 Z" fill="#9a9a9a"/></svg>
<div class="dz" style="top:477.0px;height:28px"></div>
<svg style="left:228px;top:480.0px" width="30" height="28"><path d="M7,10.5 L12.5,5 H18.5 V11 L13,16.5 Z" fill="none" stroke="#d07878" stroke-width="1.1"/><circle cx="15.3" cy="8.3" r="1" fill="#d07878"/></svg>
<div class="t" style="left:260px;top:485.5px;font-size:12px;color:#d8d8d8;letter-spacing:-0.1px">Labels</div>
<div class="kb" style="left:400.5px;top:484.0px"></div>
<div class="dz" style="top:508.0px;height:28px"></div>
<svg style="left:228px;top:511.0px" width="30" height="28"><path d="M6,5.5 H19 V13.5 H12 L9.5,16.5 V13.5 H6 Z" fill="none" stroke="#d07878" stroke-width="1.1"/></svg>
<div class="t" style="left:260px;top:516.5px;font-size:12px;color:#d8d8d8;letter-spacing:-0.1px">Tooltip</div>
<div class="kb" style="left:400.5px;top:515.0px"></div>
<div class="dz" style="top:539.0px;height:28px"></div>
<svg style="left:228px;top:542.0px" width="30" height="28"><circle cx="13" cy="11" r="6.5" fill="none" stroke="#a978d8" stroke-width="1.1" stroke-dasharray="3,1.2"/><path d="M11.3,8 L15.5,11 L11.3,14 Z" fill="#a978d8"/></svg>
<div class="t" style="left:260px;top:547.5px;font-size:12px;color:#d8d8d8;letter-spacing:-0.1px">Motion</div>
<div class="kb" style="left:400.5px;top:546.0px"></div>

<!-- Report header -->
<div class="a" style="left:432px;top:94px;width:834px;height:30px;background:#474747"></div>
<!-- chart toolbar column -->
<div class="a" style="left:432px;top:127px;width:40px;height:623px;background:#434343"></div>
<!-- chart -->
<div class="a" style="left:475px;top:127px;width:791px;height:621px;background:#fff"></div>
<!-- formatting panel -->
<div class="a" style="left:1269px;top:94px;width:30px;height:656px;background:#474747"></div>


<!-- report header content -->
<svg style="left:432px;top:94px" width="140" height="30">
 <circle cx="22.9" cy="13.8" r="7.3" fill="none" stroke="#5aa0d0" stroke-width="1.1"/>
 <rect x="22" y="12" width="1.8" height="6" fill="#e0e0e0"/><rect x="22" y="9" width="1.8" height="1.8" fill="#e0e0e0"/>
 <rect x="33" y="0.7" width="18" height="18.3" fill="#5f5f5a"/>
 <rect x="51" y="0.7" width="17" height="18.3" fill="#4a5358"/>
 <rect x="68" y="0.7" width="18" height="18.3" fill="#6a6563"/>
 <rect x="86" y="0.7" width="17" height="18.3" fill="#545460"/>
 <rect x="103" y="0.7" width="18" height="18.3" fill="#4f555a"/>
 <rect x="103.5" y="19" width="17.5" height="7.8" fill="#4f5458"/>
 <rect x="121" y="0.7" width="7" height="18.3" fill="#504a48"/>
</svg>
<div class="t" style="left:561px;top:102px;font-size:12px;color:#f0f0f0">Sample</div>
<svg style="left:1040px;top:94px" width="226" height="30">
 <path d="M9,14.5 H23 M14.5,9 L9,14.5 L14.5,20" fill="none" stroke="#d8d8d8" stroke-width="1.8"/>
 <path d="M36,14.5 H50 M44.5,9 L50,14.5 L44.5,20" fill="none" stroke="#707070" stroke-width="1.8"/>
 <path d="M64,7 H76 L80,11 V23 H64 Z" fill="#d0d0d0"/><rect x="68" y="7" width="7" height="4.5" fill="#474747"/><rect x="72.5" y="7.8" width="1.6" height="3" fill="#d0d0d0"/>
 <circle cx="94.5" cy="20.5" r="1.6" fill="#d0d0d0"/>
 <path d="M93,13.5 A7,7 0 0 1 100.5,21 M93,9 A11.5,11.5 0 0 1 105,21" fill="none" stroke="#d0d0d0" stroke-width="1.3"/>
 <rect x="124" y="7" width="10" height="4" fill="#d0d0d0"/>
 <path d="M120,11.5 H137.5 V19.5 H134.5 V17 H123 V19.5 H120 Z" fill="#d0d0d0"/>
 <rect x="124" y="18" width="10" height="5" fill="none" stroke="#d0d0d0" stroke-width="1.3"/>
 <circle cx="151.5" cy="14.5" r="2.6" fill="none" stroke="#d0d0d0" stroke-width="1.2"/>
 <circle cx="160.5" cy="9.5" r="2.6" fill="none" stroke="#d0d0d0" stroke-width="1.2"/>
 <circle cx="160.5" cy="19.5" r="2.6" fill="none" stroke="#d0d0d0" stroke-width="1.2"/>
 <path d="M154,13 L158,11 M154,16 L158,18" stroke="#d0d0d0" stroke-width="1.2"/>
 <path d="M181,11.5 Q181,8.5 184,8.5 Q187,8.5 187,11 Q187,13 184.5,14 V16" fill="none" stroke="#e0e0e0" stroke-width="1.8"/>
 <rect x="183.5" y="17.6" width="2" height="2" fill="#e0e0e0"/>
 <path d="M206.5,8.5 L218,20 M218,8.5 L206.5,20" stroke="#d0d0d0" stroke-width="1.3"/>
</svg>
<!-- formatting panel -->
<svg style="left:1269px;top:94px" width="30" height="30">
 <path d="M16.5,11.5 L11,16.5 L16.5,21.5" fill="none" stroke="#cfcfcf" stroke-width="1.1"/>
</svg>
<div class="t" style="left:1276px;top:123px;font-size:12px;font-weight:bold;color:#d8d8d8;letter-spacing:-0.3px;writing-mode:vertical-rl">Formatting Panel</div>

<!-- chart toolbar -->
<div class="a" style="left:437px;top:132px;width:30px;height:30px;background:#2a2a2a;border:1px solid #5a5a5a;border-radius:4px"></div>
<svg style="left:432px;top:127px" width="40" height="623">
 <path d="M15,13 V26.5 L18.2,23.5 L21,29 L23,28 L20.3,22.5 L24.5,22 Z" fill="#e0e0e0"/>
 <path d="M13.2,54.9 H23.8 M18.5,49.6 V60.2" stroke="#d8d8d8" stroke-width="1.1"/>
 <path d="M21,56.4 L21,65 L27.5,60.7 Z" fill="#d8d8d8"/>
 <rect x="12.5" y="86.5" width="15" height="15" fill="none" stroke="#d0d0d0" stroke-width="1" stroke-dasharray="2.5,1.5"/>
 <path d="M17.5,91 L28,95 L24,97 L22,101.5 Z" fill="#d8d8d8"/>
 <path d="M5,195.5 H34.5" stroke="#2c2c2c" stroke-width="1.2"/>
 <!-- grid icon -->
 <g fill="#cfcfcf">
  <rect x="12" y="208" width="2" height="17"/>
  <rect x="15" y="208" width="15" height="2"/>
  <rect x="16" y="212" width="2" height="2"/><rect x="19" y="212" width="2" height="2"/><rect x="22" y="212" width="2" height="2"/><rect x="25" y="212" width="2" height="2"/><rect x="28" y="212" width="2" height="2"/>
  <rect x="16" y="215.5" width="2" height="2"/><rect x="19" y="215.5" width="2" height="2"/><rect x="22" y="215.5" width="2" height="2"/><rect x="25" y="215.5" width="2" height="2"/><rect x="28" y="215.5" width="2" height="2"/>
  <rect x="16" y="219" width="2" height="2"/><rect x="19" y="219" width="2" height="2"/><rect x="22" y="219" width="2" height="2"/><rect x="25" y="219" width="2" height="2"/>
  <rect x="16" y="222.5" width="2" height="2"/><rect x="19" y="222.5" width="2" height="2"/><rect x="22" y="222.5" width="2" height="2"/>
 </g>
 <!-- column icon -->
 <g fill="#cfcfcf">
  <rect x="12" y="245" width="2" height="17"/><rect x="15.5" y="250" width="2.2" height="12"/><rect x="19" y="248" width="2.2" height="14"/><rect x="22.5" y="247" width="2.2" height="15"/><rect x="26" y="254" width="2.2" height="8"/>
 </g>
 <!-- bar icon -->
 <g fill="#cfcfcf">
  <rect x="12" y="283" width="17" height="2"/><rect x="12" y="287" width="10" height="2"/><rect x="12" y="291" width="14" height="2"/><rect x="12" y="295" width="15" height="2"/><rect x="12" y="299" width="7" height="2"/>
 </g>
 <g fill="#9a9a9a">
  <path d="M33.5,221 V225.5 H29 Z"/><path d="M33.5,259 V263.5 H29 Z"/><path d="M33.5,296 V300.5 H29 Z"/>
  <path d="M33.5,332.5 V337 H29 Z"/><path d="M33.5,370 V374.5 H29 Z"/><path d="M33.5,407 V411.5 H29 Z"/><path d="M33.5,444 V448.5 H29 Z"/><path d="M33.5,481 V485.5 H29 Z"/><path d="M33.5,517 V521.5 H29 Z"/><path d="M33.5,554 V558.5 H29 Z"/><path d="M33.5,591 V595.5 H29 Z"/>
 </g>
</svg>
<div class="a" style="left:437px;top:439.5px;width:30px;height:29px;background:#2a2a2a;border:1px solid #5a5a5a;border-radius:4px"></div>
<svg style="left:432px;top:127px" width="40" height="623">
 <path d="M11,323 Q14,317 19,320 T29,317 M11,329 Q14,323 19,326 T29,323" fill="none" stroke="#d0d0d0" stroke-width="1.1"/>
 <path d="M12,356 L16,359 L20,356 L24,360 L28,357 V371 H12 Z" fill="#d0d0d0"/>
 <path d="M19.5,393 A8,8 0 1 0 27.5,401 H19.5 Z" fill="#d0d0d0"/>
 <path d="M21,391 A8,8 0 0 1 29,399 H21 Z" fill="#d0d0d0"/>
 <path d="M20,428 L28,434 L25,443 L15,443 L12,434 Z M20,432 L24,435 L22.5,440 L17.5,440 L16,435 Z M20,428 V443 M12,434 L28,434 M15,443 L25,428" fill="none" stroke="#aaa" stroke-width="0.9"/>
 <circle cx="23.5" cy="466" r="3" fill="#d0d0d0"/><circle cx="16" cy="471" r="2.5" fill="#d0d0d0"/><circle cx="22" cy="476" r="2" fill="#d0d0d0"/><circle cx="17.5" cy="478" r="1.8" fill="#d0d0d0"/><circle cx="27" cy="476" r="1" fill="#d0d0d0"/>
 <path d="M12,503 H18 V520 H12 Z M19.5,503 H23 V510 H19.5 Z M24.5,503 H28 V507 H24.5 Z M24.5,508.5 H28 V510 H24.5 Z M19.5,511.5 H28 V515 H19.5 Z M19.5,516.5 H28 V520 H19.5 Z" fill="#d0d0d0"/>
 <path d="M12.5,551 A7.5,7.5 0 0 1 27.5,551" fill="none" stroke="#d0d0d0" stroke-width="2.3"/>
 <path d="M20,552 L23.5,545" stroke="#d0d0d0" stroke-width="2"/>
 <circle cx="20" cy="585" r="7" fill="none" stroke="#d0d0d0" stroke-width="1.6"/>
 <ellipse cx="20" cy="585" rx="3" ry="7" fill="none" stroke="#d0d0d0" stroke-width="1.3"/>
 <path d="M13,585 H27 M14,581 H26 M14,589 H26" stroke="#d0d0d0" stroke-width="1.2"/>
 <rect x="13" y="613" width="14" height="10" fill="none" stroke="#d0d0d0" stroke-width="1.2"/>
</svg>

<!-- chart content -->
<div class="a" style="left:506px;top:157px;width:758px;height:556px;background:#fafafa"></div>
<svg style="left:475px;top:127px" width="791" height="621">
 <path d="M30.5,30.4 H789" stroke="#d4d4d4" stroke-width="1"/>
 <path d="M30.5,109.0 H789" stroke="#d4d4d4" stroke-width="1"/>
 <path d="M30.5,188.3 H789" stroke="#d4d4d4" stroke-width="1"/>
 <path d="M30.5,268.0 H789" stroke="#d4d4d4" stroke-width="1"/>
 <path d="M30.5,347.4 H789" stroke="#d4d4d4" stroke-width="1"/>
 <path d="M30.5,427.0 H789" stroke="#d4d4d4" stroke-width="1"/>
 <path d="M30.5,506.0 H789" stroke="#d4d4d4" stroke-width="1"/>
 <path d="M30.5,585.5 H789" stroke="#d4d4d4" stroke-width="1"/>
 <path d="M31,30 V586" stroke="#cfcfcf" stroke-width="1"/>
 <polyline points="67.0,326.0 135.5,438.0 204.0,393.0 272.5,272.0 341.0,553.0 409.5,101.0 478.0,321.0 546.5,475.5 615.0,119.0 683.5,285.5 752.0,226.5" fill="none" stroke="#5aaad4" stroke-width="1.5" stroke-linejoin="miter"/>
</svg>
<div class="t" style="left:478px;top:133px;font-size:14px;color:#4a8fc0">Sales by Manufacturer</div>
<div class="t" style="left:478px;top:151.9px;width:25px;text-align:right;font-size:10px;color:#a8a8a8;letter-spacing:-0.2px">1.4M</div>
<div class="t" style="left:478px;top:389.5px;width:25px;text-align:right;font-size:10px;color:#a8a8a8;letter-spacing:-0.2px">1.3M</div>
<div class="t" style="left:478px;top:468.9px;width:25px;text-align:right;font-size:10px;color:#a8a8a8;letter-spacing:-0.2px">1.2M</div>
<div class="t" style="left:478px;top:548.5px;width:25px;text-align:right;font-size:10px;color:#a8a8a8;letter-spacing:-0.2px">1.1M</div>
<div class="t" style="left:478px;top:627.5px;width:25px;text-align:right;font-size:10px;color:#a8a8a8;letter-spacing:-0.2px">1.1M</div>
<div class="t" style="left:478px;top:700px;width:25px;text-align:right;font-size:10px;color:#a8a8a8;letter-spacing:-0.2px">1.1M</div>
<div class="t" style="left:502px;top:721.5px;width:80px;text-align:center;font-size:10px;color:#a0a0a0;letter-spacing:-0.1px">Acme</div>
<div class="t" style="left:570.5px;top:721.5px;width:80px;text-align:center;font-size:10px;color:#a0a0a0;letter-spacing:-0.1px">Adihash</div>
<div class="t" style="left:639px;top:721.5px;width:80px;text-align:center;font-size:10px;color:#a0a0a0;letter-spacing:-0.1px">Esics</div>
<div class="t" style="left:707.5px;top:721.5px;width:80px;text-align:center;font-size:10px;color:#a0a0a0;letter-spacing:-0.1px">Nuke</div>
<div class="t" style="left:776px;top:721.5px;width:80px;text-align:center;font-size:10px;color:#a0a0a0;letter-spacing:-0.1px">Old Balance</div>
<div class="t" style="left:844.5px;top:721.5px;width:80px;text-align:center;font-size:10px;color:#a0a0a0;letter-spacing:-0.1px">Over Armour</div>
<div class="t" style="left:913px;top:721.5px;width:80px;text-align:center;font-size:10px;color:#a0a0a0;letter-spacing:-0.1px">Poomah</div>
<div class="t" style="left:981.5px;top:721.5px;width:80px;text-align:center;font-size:10px;color:#a0a0a0;letter-spacing:-0.1px">Princess</div>
<div class="t" style="left:1050px;top:721.5px;width:80px;text-align:center;font-size:10px;color:#a0a0a0;letter-spacing:-0.1px">Ribuck</div>
<div class="t" style="left:1118.5px;top:721.5px;width:80px;text-align:center;font-size:10px;color:#a0a0a0;letter-spacing:-0.1px">Slicenger</div>
<div class="t" style="left:1187px;top:721.5px;width:80px;text-align:center;font-size:10px;color:#a0a0a0;letter-spacing:-0.1px">Woolson</div>
<div class="a" style="left:900px;top:381px;width:168px;height:114px;background:#f7f7f7;border:3px solid #d8d8d8;border-radius:8px"></div>
<svg style="left:940px;top:381px" width="128" height="114">
 <circle cx="33.8" cy="23" r="2.4" fill="#a564c8"/><circle cx="40" cy="28" r="2.4" fill="#4a78c0"/><circle cx="27.6" cy="28" r="2.4" fill="#e08a3a"/><circle cx="30" cy="34.6" r="2.4" fill="#6aa890"/><circle cx="38" cy="34.6" r="2.4" fill="#e0684a"/>
 <rect x="77.5" y="27.5" width="12.5" height="12.5" fill="none" stroke="#4a9a9a" stroke-width="1.4"/>
 <path d="M84.5,26.5 A7,7 0 1 1 91,33.5" fill="none" stroke="#4a9a9a" stroke-width="1.4"/>
</svg>

<!-- ============ CHART TYPE DROPDOWN ============ -->
<div class="a" style="left:587px;top:0;width:353px;height:630px;background:#484848;border-radius:0 0 6px 6px"></div>
<div class="t" style="left:786px;top:7.5px;width:76px;text-align:center;font-size:12px;color:#f0f0f0">All</div>
<div class="t" style="left:864px;top:7.5px;width:76px;text-align:center;font-size:12px;color:#f0f0f0;letter-spacing:-0.3px">Sales</div>
<div class="cell" style="left:786px;top:30.0px;"></div><div class="cell" style="left:864px;top:30.0px"></div>
<div class="t" style="left:594.5px;top:37.5px;font-size:11.8px;color:#f2f2f2;letter-spacing:-0.15px">Column Chart</div>
<svg style="left:816.5px;top:36.0px;" width="16" height="16"><g fill="#d6d6d6"><rect x="0.5" y="0.3" width="2.3" height="14.3"/><rect x="3.5" y="5.2" width="2.3" height="9.4"/><rect x="6.5" y="3.2" width="2.3" height="11.4"/><rect x="9.5" y="2.4" width="2.3" height="12.2"/><rect x="12.5" y="8.3" width="2.3" height="6.3"/></g></svg><svg style="left:894.5px;top:36.0px" width="16" height="16"><g fill="#d6d6d6"><rect x="0.5" y="0.3" width="2.3" height="14.3"/><rect x="3.5" y="5.2" width="2.3" height="9.4"/><rect x="6.5" y="3.2" width="2.3" height="11.4"/><rect x="9.5" y="2.4" width="2.3" height="12.2"/><rect x="12.5" y="8.3" width="2.3" height="6.3"/></g></svg>
<div class="cell" style="left:786px;top:60.0px;"></div><div class="cell" style="left:864px;top:60.0px"></div>
<div class="t" style="left:594.5px;top:67.5px;font-size:11.8px;color:#f2f2f2;letter-spacing:-0.15px">Stacked Column Chart</div>
<svg style="left:816.5px;top:66.0px;" width="16" height="16"><g fill="#d6d6d6"><rect x="2" y="1.5" width="2.2" height="3.7"/><rect x="2" y="6.5" width="2.2" height="6.8"/><rect x="5" y="6.5" width="2.2" height="3"/><rect x="5" y="10.5" width="2.2" height="2.8"/><rect x="8" y="4" width="2.2" height="3.5"/><rect x="8" y="8.5" width="2.2" height="4.8"/><rect x="11" y="3" width="2.2" height="3.8"/><rect x="11" y="7.8" width="2.2" height="5.5"/></g></svg><svg style="left:894.5px;top:66.0px" width="16" height="16"><g fill="#d6d6d6"><rect x="2" y="1.5" width="2.2" height="3.7"/><rect x="2" y="6.5" width="2.2" height="6.8"/><rect x="5" y="6.5" width="2.2" height="3"/><rect x="5" y="10.5" width="2.2" height="2.8"/><rect x="8" y="4" width="2.2" height="3.5"/><rect x="8" y="8.5" width="2.2" height="4.8"/><rect x="11" y="3" width="2.2" height="3.8"/><rect x="11" y="7.8" width="2.2" height="5.5"/></g></svg>
<div class="cell" style="left:786px;top:90.0px;"></div><div class="cell" style="left:864px;top:90.0px"></div>
<div class="t" style="left:594.5px;top:97.5px;font-size:11.8px;color:#f2f2f2;letter-spacing:-0.15px">Stacked 100% Column Chart</div>
<svg style="left:816.5px;top:96.0px;" width="16" height="16"><g fill="#d6d6d6"><rect x="2" y="1.5" width="2.2" height="3.5"/><rect x="2" y="6" width="2.2" height="7.5"/><rect x="5" y="1.5" width="2.2" height="8"/><rect x="5" y="10.5" width="2.2" height="3"/><rect x="8" y="1.5" width="2.2" height="5"/><rect x="8" y="7.5" width="2.2" height="6"/><rect x="11" y="1.5" width="2.2" height="4.5"/><rect x="11" y="7" width="2.2" height="6.5"/></g></svg><svg style="left:894.5px;top:96.0px" width="16" height="16"><g fill="#d6d6d6"><rect x="2" y="1.5" width="2.2" height="3.5"/><rect x="2" y="6" width="2.2" height="7.5"/><rect x="5" y="1.5" width="2.2" height="8"/><rect x="5" y="10.5" width="2.2" height="3"/><rect x="8" y="1.5" width="2.2" height="5"/><rect x="8" y="7.5" width="2.2" height="6"/><rect x="11" y="1.5" width="2.2" height="4.5"/><rect x="11" y="7" width="2.2" height="6.5"/></g></svg>
<div class="cell" style="left:786px;top:120.0px;background:#35699c;"></div><div class="cell" style="left:864px;top:120.0px"></div>
<div class="t" style="left:594.5px;top:127.5px;font-size:11.8px;color:#f2f2f2;letter-spacing:-0.15px">Line Chart</div>
<svg style="left:816.5px;top:126.0px;opacity:0.35;" width="16" height="16"><path d="M1.5,9 L6,5.5 L8.5,8 L13.5,1.5 M1.5,13 L6,9.5 L8.5,12 L13.5,5.5" fill="none" stroke="#d6d6d6" stroke-width="1.1"/></svg><svg style="left:894.5px;top:126.0px" width="16" height="16"><path d="M1.5,9 L6,5.5 L8.5,8 L13.5,1.5 M1.5,13 L6,9.5 L8.5,12 L13.5,5.5" fill="none" stroke="#d6d6d6" stroke-width="1.1"/></svg>
<div class="cell" style="left:786px;top:150.0px;"></div><div class="cell" style="left:864px;top:150.0px"></div>
<div class="t" style="left:594.5px;top:157.5px;font-size:11.8px;color:#f2f2f2;letter-spacing:-0.15px">Spline Chart</div>
<svg style="left:816.5px;top:156.0px;" width="16" height="16"><path d="M0.5,8 Q3,3 7,6 T14.5,3.5 M0.5,12.5 Q3,7.5 7,10.5 T14.5,8" fill="none" stroke="#d6d6d6" stroke-width="1.1"/></svg><svg style="left:894.5px;top:156.0px" width="16" height="16"><path d="M0.5,8 Q3,3 7,6 T14.5,3.5 M0.5,12.5 Q3,7.5 7,10.5 T14.5,8" fill="none" stroke="#d6d6d6" stroke-width="1.1"/></svg>
<div class="cell" style="left:786px;top:180.0px;"></div><div class="cell" style="left:864px;top:180.0px"></div>
<div class="t" style="left:594.5px;top:187.5px;font-size:11.8px;color:#f2f2f2;letter-spacing:-0.15px">Step Line Chart</div>
<svg style="left:816.5px;top:186.0px;" width="16" height="16"><path d="M0.5,1.5 H3 V6 H7 V2 H9.5 V6 H14 M0.5,6 V13.5 H4 V9 H7 V13 H10 V8.5 H12.5 V13.5 H14.5" fill="none" stroke="#d6d6d6" stroke-width="1.1"/></svg><svg style="left:894.5px;top:186.0px" width="16" height="16"><path d="M0.5,1.5 H3 V6 H7 V2 H9.5 V6 H14 M0.5,6 V13.5 H4 V9 H7 V13 H10 V8.5 H12.5 V13.5 H14.5" fill="none" stroke="#d6d6d6" stroke-width="1.1"/></svg>
<div class="cell" style="left:786px;top:210.0px;"></div><div class="cell" style="left:864px;top:210.0px"></div>
<div class="t" style="left:594.5px;top:217.5px;font-size:11.8px;color:#f2f2f2;letter-spacing:-0.15px">Point Chart</div>
<svg style="left:816.5px;top:216.0px;" width="16" height="16"><g fill="#d6d6d6"><rect x="11.5" y="1" width="2.5" height="2.5"/><rect x="6.5" y="4" width="2.5" height="2.5"/><rect x="3" y="6" width="2.5" height="2.5"/><rect x="9" y="7" width="2.5" height="2.5"/><rect x="5" y="9.5" width="2.5" height="2.5"/><rect x="1" y="11.5" width="2.5" height="2.5"/><rect x="10" y="10" width="2.5" height="2.5"/></g></svg><svg style="left:894.5px;top:216.0px" width="16" height="16"><g fill="#d6d6d6"><rect x="11.5" y="1" width="2.5" height="2.5"/><rect x="6.5" y="4" width="2.5" height="2.5"/><rect x="3" y="6" width="2.5" height="2.5"/><rect x="9" y="7" width="2.5" height="2.5"/><rect x="5" y="9.5" width="2.5" height="2.5"/><rect x="1" y="11.5" width="2.5" height="2.5"/><rect x="10" y="10" width="2.5" height="2.5"/></g></svg>
<div class="cell" style="left:786px;top:240.0px;"></div><div class="cell" style="left:864px;top:240.0px"></div>
<div class="t" style="left:594.5px;top:247.5px;font-size:11.8px;color:#f2f2f2;letter-spacing:-0.15px">Lollipop Chart</div>
<svg style="left:816.5px;top:246.0px;" width="16" height="16"><g fill="none" stroke="#d6d6d6" stroke-width="1"><circle cx="3" cy="6" r="2"/><circle cx="8" cy="2.5" r="2"/><circle cx="13" cy="6" r="2"/><path d="M3,8 V15 M8,4.5 V15 M13,8 V15"/></g></svg><svg style="left:894.5px;top:246.0px" width="16" height="16"><g fill="none" stroke="#d6d6d6" stroke-width="1"><circle cx="3" cy="6" r="2"/><circle cx="8" cy="2.5" r="2"/><circle cx="13" cy="6" r="2"/><path d="M3,8 V15 M8,4.5 V15 M13,8 V15"/></g></svg>
<div class="cell" style="left:786px;top:270.0px;"></div><div class="cell" style="left:864px;top:270.0px"></div>
<div class="t" style="left:594.5px;top:277.5px;font-size:11.8px;color:#f2f2f2;letter-spacing:-0.15px">Area Chart</div>
<svg style="left:816.5px;top:276.0px;" width="16" height="16"><path d="M0.5,2 L4,4.5 L8,2.5 L11,5 L14.5,1.5 V14 H0.5 Z" fill="#d6d6d6"/></svg><svg style="left:894.5px;top:276.0px" width="16" height="16"><path d="M0.5,2 L4,4.5 L8,2.5 L11,5 L14.5,1.5 V14 H0.5 Z" fill="#d6d6d6"/></svg>
<div class="cell" style="left:786px;top:300.0px;"></div><div class="cell" style="left:864px;top:300.0px"></div>
<div class="t" style="left:594.5px;top:307.5px;font-size:11.8px;color:#f2f2f2;letter-spacing:-0.15px">Spline Area Chart</div>
<svg style="left:816.5px;top:306.0px;" width="16" height="16"><path d="M0.5,3 Q2.5,1.5 4.5,4 Q7,2 9,4 Q11.5,1.5 14.5,3 V14 H0.5 Z" fill="#d6d6d6"/></svg><svg style="left:894.5px;top:306.0px" width="16" height="16"><path d="M0.5,3 Q2.5,1.5 4.5,4 Q7,2 9,4 Q11.5,1.5 14.5,3 V14 H0.5 Z" fill="#d6d6d6"/></svg>
<div class="cell" style="left:786px;top:330.0px;"></div><div class="cell" style="left:864px;top:330.0px"></div>
<div class="t" style="left:594.5px;top:337.5px;font-size:11.8px;color:#f2f2f2;letter-spacing:-0.15px">Step Line Area Chart</div>
<svg style="left:816.5px;top:336.0px;" width="16" height="16"><path d="M0.5,5 H3.5 V1.5 H7.5 V4 H10.5 V7 H14.5 V14 H0.5 Z" fill="#d6d6d6"/></svg><svg style="left:894.5px;top:336.0px" width="16" height="16"><path d="M0.5,5 H3.5 V1.5 H7.5 V4 H10.5 V7 H14.5 V14 H0.5 Z" fill="#d6d6d6"/></svg>
<div class="cell" style="left:786px;top:360.0px;"></div><div class="cell" style="left:864px;top:360.0px"></div>
<div class="t" style="left:594.5px;top:367.5px;font-size:11.8px;color:#f2f2f2;letter-spacing:-0.15px">Stacked Area Chart</div>
<svg style="left:816.5px;top:366.0px;" width="16" height="16"><path d="M1,1.5 L4.5,4 L8,1.5 L11,3.5 L14,1.5 V4 L11,6 L8,4 L4.5,6.5 L1,4 Z M1,6.5 L4.5,9 L8,6.5 L11,8.5 L14,6.5 V14 H1 Z" fill="#d6d6d6"/></svg><svg style="left:894.5px;top:366.0px" width="16" height="16"><path d="M1,1.5 L4.5,4 L8,1.5 L11,3.5 L14,1.5 V4 L11,6 L8,4 L4.5,6.5 L1,4 Z M1,6.5 L4.5,9 L8,6.5 L11,8.5 L14,6.5 V14 H1 Z" fill="#d6d6d6"/></svg>
<div class="cell" style="left:786px;top:390.0px;"></div><div class="cell" style="left:864px;top:390.0px"></div>
<div class="t" style="left:594.5px;top:397.5px;font-size:11.8px;color:#f2f2f2;letter-spacing:-0.15px">Spline Area Stacked Chart</div>
<svg style="left:816.5px;top:396.0px;" width="16" height="16"><path d="M1,1.5 Q4,3.5 7,1.5 Q10,3 14,1.5 V4 Q10,5.5 7,4 Q4,6 1,4 Z M1,6.5 Q4,8.5 7,6.5 Q10,8 14,6.5 V14 H1 Z" fill="#d6d6d6"/></svg><svg style="left:894.5px;top:396.0px" width="16" height="16"><path d="M1,1.5 Q4,3.5 7,1.5 Q10,3 14,1.5 V4 Q10,5.5 7,4 Q4,6 1,4 Z M1,6.5 Q4,8.5 7,6.5 Q10,8 14,6.5 V14 H1 Z" fill="#d6d6d6"/></svg>
<div class="cell" style="left:786px;top:420.0px;"></div><div class="cell" style="left:864px;top:420.0px"></div>
<div class="t" style="left:594.5px;top:427.5px;font-size:11.8px;color:#f2f2f2;letter-spacing:-0.15px">Step Line Stacked Area Chart</div>
<svg style="left:816.5px;top:426.0px;" width="16" height="16"><path d="M2,3 H5 V0.5 H9 V3 H12 V5 H9 V4 H5 V6 H2 Z M1,9 H4 V6.5 H8 V9 H13 V14 H1 Z" fill="#d6d6d6"/></svg><svg style="left:894.5px;top:426.0px" width="16" height="16"><path d="M2,3 H5 V0.5 H9 V3 H12 V5 H9 V4 H5 V6 H2 Z M1,9 H4 V6.5 H8 V9 H13 V14 H1 Z" fill="#d6d6d6"/></svg>
<div class="cell" style="left:786px;top:450.0px;"></div><div class="cell" style="left:864px;top:450.0px"></div>
<div class="t" style="left:594.5px;top:457.5px;font-size:11.8px;color:#f2f2f2;letter-spacing:-0.15px">Stacked 100% Area Chart</div>
<svg style="left:816.5px;top:456.0px;" width="16" height="16"><path d="M1,1 H14 V4 L11,6 L8,4 L4.5,6.5 L1,4.5 Z M1,6.5 L4.5,8.5 L8,6.5 L11,8.5 L14,6.5 V13.5 H1 Z" fill="#d6d6d6"/></svg><svg style="left:894.5px;top:456.0px" width="16" height="16"><path d="M1,1 H14 V4 L11,6 L8,4 L4.5,6.5 L1,4.5 Z M1,6.5 L4.5,8.5 L8,6.5 L11,8.5 L14,6.5 V13.5 H1 Z" fill="#d6d6d6"/></svg>
<div class="cell" style="left:786px;top:480.0px;"></div><div class="cell" style="left:864px;top:480.0px"></div>
<div class="t" style="left:594.5px;top:487.5px;font-size:11.8px;color:#f2f2f2;letter-spacing:-0.15px">Spline 100% Area Stacked Chart</div>
<svg style="left:816.5px;top:486.0px;" width="16" height="16"><path d="M1,1 H14 V4.5 Q11,6 8,4.5 Q5,7 1,5 Z M1,7 Q5,9 8,6.5 Q11,8.5 14,6.5 V13.5 H1 Z" fill="#d6d6d6"/></svg><svg style="left:894.5px;top:486.0px" width="16" height="16"><path d="M1,1 H14 V4.5 Q11,6 8,4.5 Q5,7 1,5 Z M1,7 Q5,9 8,6.5 Q11,8.5 14,6.5 V13.5 H1 Z" fill="#d6d6d6"/></svg>
<div class="cell" style="left:786px;top:510.0px;"></div><div class="cell" style="left:864px;top:510.0px"></div>
<div class="t" style="left:594.5px;top:517.5px;font-size:11.8px;color:#f2f2f2;letter-spacing:-0.15px">Step Line 100% Stacked Area Chart</div>
<svg style="left:816.5px;top:516.0px;" width="16" height="16"><path d="M1,1 H14 V4 H11 V6.5 H7 V4.5 H4 V7 H1 Z M1,9 H4 V6.5 H7 V9 H11 V8 H14 V13.5 H1 Z" fill="#d6d6d6"/></svg><svg style="left:894.5px;top:516.0px" width="16" height="16"><path d="M1,1 H14 V4 H11 V6.5 H7 V4.5 H4 V7 H1 Z M1,9 H4 V6.5 H7 V9 H11 V8 H14 V13.5 H1 Z" fill="#d6d6d6"/></svg>
<div class="cell" style="left:786px;top:540.0px;"></div><div class="cell" style="left:864px;top:540.0px"></div>
<div class="t" style="left:594.5px;top:547.5px;font-size:11.8px;color:#f2f2f2;letter-spacing:-0.15px">Stream Area Chart</div>
<svg style="left:815.5px;top:546.0px;" width="16" height="16"><path d="M0,3.8 L11.8,0 L16.2,8.1 L11.8,16.2 L0,13.5 Z" fill="#e07a68"/><path d="M0,5.6 Q6,5 11.3,2.4 L14.8,8.1 L11.3,13.8 Q6,11.5 0,11.7 Z" fill="#fff"/><path d="M0,7 Q7,6.8 11,5.2 L14.2,8.1 L11,11 Q7,9.6 0,10 Z" fill="#5a9ccc"/></svg><svg style="left:893.5px;top:546.0px" width="16" height="16"><path d="M0,3.8 L11.8,0 L16.2,8.1 L11.8,16.2 L0,13.5 Z" fill="#e07a68"/><path d="M0,5.6 Q6,5 11.3,2.4 L14.8,8.1 L11.3,13.8 Q6,11.5 0,11.7 Z" fill="#fff"/><path d="M0,7 Q7,6.8 11,5.2 L14.2,8.1 L11,11 Q7,9.6 0,10 Z" fill="#5a9ccc"/></svg>
<div class="cell" style="left:786px;top:570.0px;"></div><div class="cell" style="left:864px;top:570.0px"></div>
<div class="t" style="left:594.5px;top:577.5px;font-size:11.8px;color:#f2f2f2;letter-spacing:-0.15px">Stream Spline Chart</div>
<svg style="left:815.5px;top:576.0px;" width="16" height="16"><path d="M0,1.5 Q3,6 4,8 Q3,10 0,14.5 L2,15 Q6,11 9,15.5 Q16.5,15 16.2,8 Q16.5,1 9,0.5 Q6,5 2,1 Z" fill="#e07a68"/><path d="M0,5 Q3,7.5 4,8 Q3,8.5 0,11 Q6,9.5 9,12.5 Q14.5,12.5 14.5,8 Q14.5,3.5 9,3.5 Q6,6.5 0,5 Z" fill="#fff"/><path d="M0,6.3 Q4,8 0,9.7 Z M5,8 Q7,5.5 9.5,4.5 Q13.8,5 13.8,8 Q13.8,11 9.5,11.5 Q7,10.5 5,8 Z" fill="#5a9ccc"/><path d="M0,6.5 L5,8 L0,9.5 Z" fill="#5a9ccc"/></svg><svg style="left:893.5px;top:576.0px" width="16" height="16"><path d="M0,1.5 Q3,6 4,8 Q3,10 0,14.5 L2,15 Q6,11 9,15.5 Q16.5,15 16.2,8 Q16.5,1 9,0.5 Q6,5 2,1 Z" fill="#e07a68"/><path d="M0,5 Q3,7.5 4,8 Q3,8.5 0,11 Q6,9.5 9,12.5 Q14.5,12.5 14.5,8 Q14.5,3.5 9,3.5 Q6,6.5 0,5 Z" fill="#fff"/><path d="M0,6.3 Q4,8 0,9.7 Z M5,8 Q7,5.5 9.5,4.5 Q13.8,5 13.8,8 Q13.8,11 9.5,11.5 Q7,10.5 5,8 Z" fill="#5a9ccc"/><path d="M0,6.5 L5,8 L0,9.5 Z" fill="#5a9ccc"/></svg>
<div class="cell" style="left:786px;top:600.0px;"></div><div class="cell" style="left:864px;top:600.0px"></div>
<div class="t" style="left:594.5px;top:607.5px;font-size:11.8px;color:#f2f2f2;letter-spacing:-0.15px">Stream Step Chart</div>
<svg style="left:815.5px;top:606.0px;" width="16" height="16"><path d="M0,3 H6 V0 H16 V16 H6 V13 H0 Z" fill="#e07a68"/><path d="M0,4.5 H7.5 V1.5 H14.5 V14.5 H7.5 V11.5 H0 Z" fill="#fff"/><path d="M0,6 H9 V3 H13 V13 H9 V10 H0 Z" fill="#5a9ccc"/></svg><svg style="left:893.5px;top:606.0px" width="16" height="16"><path d="M0,3 H6 V0 H16 V16 H6 V13 H0 Z" fill="#e07a68"/><path d="M0,4.5 H7.5 V1.5 H14.5 V14.5 H7.5 V11.5 H0 Z" fill="#fff"/><path d="M0,6 H9 V3 H13 V13 H9 V10 H0 Z" fill="#5a9ccc"/></svg>
<!-- axis side menu -->
<div class="a" style="left:417px;top:229px;width:170px;height:30px;background:#474747;border:1px solid #2a2a2a"></div>
<div class="a" style="left:417px;top:259px;width:170px;height:30.5px;background:#336a9e;border-left:1px solid #2a2a2a"></div>
<div class="a" style="left:417px;top:289.5px;width:170px;height:29px;background:#474747;border:1px solid #2a2a2a"></div>
<div class="t" style="left:420px;top:236px;font-size:14px;color:#c8c8c8">y<span style="font-size:9px">1</span></div>
<div class="t" style="left:420px;top:266px;font-size:14px;color:#7fa8cc">y<span style="font-size:9px">2</span></div>
<svg style="left:417px;top:289.5px" width="20" height="29"><path d="M4.5,8 V22 M3,10 H14 M3,14.5 H14 M3,19 H14" stroke="#e0e0e0" stroke-width="1.1"/></svg>
<div class="t" style="left:439px;top:238.5px;font-size:12px;color:#f4f4f4;letter-spacing:-0.1px;-webkit-text-stroke:0.25px #f4f4f4">Primary Axis</div>
<div class="t" style="left:439px;top:268.5px;font-size:12px;font-weight:bold;color:#fff;letter-spacing:-0.45px">Secondary Axis</div>
<div class="t" style="left:439px;top:298.5px;font-size:12px;color:#f4f4f4;letter-spacing:-0.1px;-webkit-text-stroke:0.25px #f4f4f4">Trellis</div>
<svg style="left:577px;top:250px" width="8" height="8"><path d="M6.5,1 V6.5 H1 Z" fill="#9a9a9a"/></svg>
<svg style="left:577px;top:280px" width="8" height="8"><path d="M6.5,1 V6.5 H1 Z" fill="#8aa8c8"/></svg>
<svg style="left:577px;top:310px" width="8" height="8"><path d="M6.5,1 V6.5 H1 Z" fill="#9a9a9a"/></svg>

<!-- drag pill -->
<div class="a" style="left:765px;top:134px;width:140px;height:23.5px;background:#f4ab5c;border:1.5px solid #c8692a;border-radius:12px"></div>
<svg style="left:769px;top:138px" width="16" height="16">
 <rect x="2.5" y="6.5" width="2.8" height="6" fill="#fff"/><rect x="6.5" y="4" width="2.8" height="8.5" fill="#fff"/><rect x="10.5" y="1.8" width="2.8" height="10.7" fill="#fff"/>
</svg>
<div class="t" style="left:788px;top:139.5px;font-size:12px;color:#f8eee0">Net Profit</div>
<!-- hand cursor -->
<svg style="left:789px;top:126px" width="18" height="18">
 <path d="M3.5,9.5 L3.5,6.5 Q3.5,5 5,5 Q6,5 6.2,6 L6.2,4 Q6.2,2.6 7.6,2.6 Q8.8,2.6 9,3.8 Q9.3,2.4 10.6,2.5 Q11.8,2.6 11.8,4 Q12.2,3.2 13.2,3.4 Q14.5,3.7 14.5,5.2 L14.5,10 Q14.5,14.5 10.5,15 L8,15 Q5,14.8 3.5,11.5 Z" fill="#eef2fa" stroke="#111" stroke-width="1"/>
</svg>
<!-- arrows -->
<svg style="left:0;top:0" width="1299" height="789">
 <path d="M355,189 L393,233" stroke="#cc77aa" stroke-width="4" stroke-linecap="round"/>
 <path d="M398.5,240 L377.5,231 L386,225 L392.5,219.5 Z" fill="#cc77aa"/>
 <path d="M754,72.5 L790,115" stroke="#14a070" stroke-width="4" stroke-linecap="round"/>
 <path d="M796.5,123.5 L776,114 L783.5,108 L789.5,102.5 Z" fill="#14a070"/>
</svg>

<!-- ============ BOTTOM BAR ============ -->
<div class="a" style="left:0;top:752px;width:1299px;height:3px;background:#3cb33c"></div>
<div class="a" style="left:0;top:755px;width:1299px;height:34px;background:#1b1b1b"></div>


<svg style="left:0;top:755px" width="100" height="34">
 <path d="M14,11.5 H27 M14,15.5 H27 M14,19.5 H27" stroke="#e8e8e8" stroke-width="1.6"/>
 <path d="M47.5,6.5 H53 L54.5,8 H58 V10 M47.5,6.5 V20.5 H52" fill="none" stroke="#d8d8d8" stroke-width="1.1"/>
 <rect x="47.5" y="8.5" width="9" height="12" fill="#6a6a6a"/>
 <circle cx="57.5" cy="16" r="5" fill="#1b1b1b" stroke="#d8d8d8" stroke-width="1.2"/>
 <path d="M54,19.5 L51,23" stroke="#d8d8d8" stroke-width="1.3"/>
 <path d="M77.5,7 H86 L83,11 V17 L80.5,16 V11 Z" fill="none" stroke="#d8d8d8" stroke-width="1.1"/>
 <path d="M87,7 H93 V19 M77.5,14 V21 H93 V19" fill="none" stroke="#d8d8d8" stroke-width="1.1"/>
 <rect x="86" y="20" width="2.5" height="2" fill="#d8d8d8"/><rect x="89.5" y="20" width="3" height="2" fill="#d8d8d8"/>
</svg>
<div class="a" style="left:100px;top:756px;width:131px;height:29px;background:#46494c;border-bottom:4px solid #3cb33c;border-radius:2px 2px 8px 8px"></div>
<svg style="left:115px;top:763px" width="14" height="14"><rect x="0.7" y="2" width="2.8" height="11" fill="#3cb83c"/><rect x="4.8" y="5.5" width="2.8" height="7.5" fill="#3cb83c"/><rect x="8.9" y="1" width="2.8" height="12" fill="#3cb83c"/></svg>
<div class="t" style="left:132px;top:763px;font-size:12px;color:#b8b8b8;letter-spacing:-0.2px">Area+Forecast</div>
<div class="a" style="left:234px;top:756px;width:131px;height:29px;background:#46494c;border-bottom:4px solid #3cb33c;border-radius:2px 2px 8px 8px"></div>
<svg style="left:249px;top:763px" width="14" height="14"><rect x="0.7" y="2" width="2.8" height="11" fill="#3cb83c"/><rect x="4.8" y="5.5" width="2.8" height="7.5" fill="#3cb83c"/><rect x="8.9" y="1" width="2.8" height="12" fill="#3cb83c"/></svg>
<div class="t" style="left:266px;top:763px;font-size:12px;color:#b8b8b8;letter-spacing:-0.2px">Area+Forecast</div>
<div class="a" style="left:367.5px;top:756px;width:131px;height:29px;background:#46494c;border-bottom:4px solid #3cb33c;border-radius:2px 2px 8px 8px"></div>
<svg style="left:382.5px;top:763px" width="14" height="14"><rect x="0.7" y="2" width="2.8" height="11" fill="#3cb83c"/><rect x="4.8" y="5.5" width="2.8" height="7.5" fill="#3cb83c"/><rect x="8.9" y="1" width="2.8" height="12" fill="#3cb83c"/></svg>
<div class="t" style="left:399.5px;top:763px;font-size:12px;color:#b8b8b8;letter-spacing:-0.2px">Area+Forecast</div>
<div class="a" style="left:501.5px;top:752px;width:140px;height:32.5px;background:#2a2a2a;border:3px solid #3cb33c;border-top:none;border-radius:0 0 7px 7px"></div>
<div class="a" style="left:504.5px;top:752px;width:134px;height:3px;background:#2a2a2a"></div>
<div class="a" style="left:0;top:752px;width:501.5px;height:3px;background:#3cb33c"></div>
<div class="t" style="left:510px;top:760px;font-size:13px;font-weight:bold;color:#fff">*</div>
<svg style="left:519px;top:761.5px" width="14" height="14"><rect x="1" y="2.5" width="2.8" height="10.5" fill="#3cb83c"/><rect x="5" y="5.5" width="2.8" height="7.5" fill="#3cb83c"/><rect x="9" y="1.5" width="2.8" height="11.5" fill="#3cb83c"/></svg>
<div class="t" style="left:536px;top:761px;font-size:12.5px;font-weight:bold;color:#fff;letter-spacing:-0.3px">Shapify - Line</div>
<svg style="left:622px;top:763px" width="14" height="10"><path d="M1.5,1.5 H12 L6.75,7.5 Z" fill="#fff"/></svg>
<svg style="left:652px;top:761px" width="20" height="20"><path d="M3.5,9.5 H16.5 M10,3 V16" stroke="#e8e8e8" stroke-width="1.6"/></svg>
<!-- bottom right icons -->
<svg style="left:1155px;top:755px" width="144" height="34">
 <path d="M14.5,8.5 L7.5,23.5 L14.5,19.5 Z" fill="none" stroke="#d0d0d0" stroke-width="0.9"/>
 <path d="M8.5,21.5 L14,12 M8,23 L14.5,15 M10,22.5 L14.5,18" stroke="#d0d0d0" stroke-width="0.8"/>
 <path d="M15.5,8.5 L22.5,21 L15.5,23.5 Z" fill="none" stroke="#d0d0d0" stroke-width="1"/>
 <path d="M17.5,13 V21.5 M19.5,16 V21" stroke="#d0d0d0" stroke-width="0.9"/>
 <circle cx="41" cy="15.4" r="8" fill="#e8201a"/>
 <path d="M55.5,9.3 L57.8,12.4 L63.6,14.4 L61.3,18.4 L57.2,21.4 L54,15 L51.6,13.5 Z" fill="none" stroke="#d8d8d8" stroke-width="1.1" stroke-linejoin="round"/>
 <path d="M60.8,18.6 L65.8,23.8" stroke="#d8d8d8" stroke-width="1.1"/>
 <path d="M74.8,14 H81 L77.9,19 Z" fill="#dde2ea"/>
 <path d="M99,16 A1.8,1.8 0 1 1 101.5,13.5 A3.8,3.8 0 1 1 95,17.5 A5.8,5.8 0 1 1 105.5,10.5 A7.5,7.5 0 1 1 92,20" fill="none" stroke="#d8d8d8" stroke-width="1.4"/>
 <circle cx="126.8" cy="16.5" r="6.8" fill="none" stroke="#d8d8d8" stroke-width="1.2" stroke-dasharray="1.2,2.2"/>
 <path d="M120.5,14 A6.8,6.8 0 0 1 133,13 M133.5,18 A6.8,6.8 0 0 1 127,23.3" fill="none" stroke="#d8d8d8" stroke-width="1.2"/>
 <path d="M125,12.5 V17.5 H129.5 M124,7.8 H129.5 M126.8,8 V9.5 M131.5,9 L133,10.5" stroke="#d8d8d8" stroke-width="1.2" fill="none"/>
</svg>
<div class="t" style="left:1192.7px;top:765px;font-size:10.5px;color:#fff">3</div>

</body></html>
